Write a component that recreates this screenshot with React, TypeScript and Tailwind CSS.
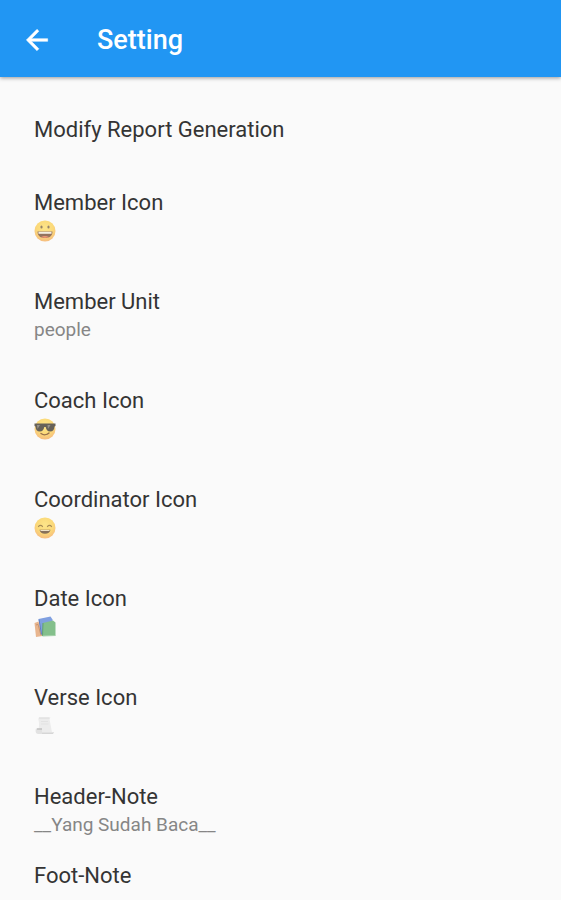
import type { ReactNode } from "react";

const iconProps = {
  className: "block h-[22px] w-[22px]",
  viewBox: "0 0 22 22",
  "aria-hidden": true,
} as const;

function FaceGradient({ id }: { id: string }) {
  return (
    <defs>
      <radialGradient id={id} cx="50%" cy="35%" r="65%">
        <stop offset="0" stopColor="#fde58a" />
        <stop offset="0.6" stopColor="#fbd978" />
        <stop offset="1" stopColor="#f6bd80" />
      </radialGradient>
    </defs>
  );
}

function GrinningFace() {
  return (
    <svg {...iconProps}>
      <FaceGradient id="grin" />
      <circle cx="11" cy="11" r="10.5" fill="url(#grin)" />
      <ellipse cx="7.5" cy="7" rx="1.1" ry="1.6" fill="#94836a" />
      <ellipse cx="14.5" cy="7" rx="1.1" ry="1.6" fill="#94836a" />
      <path d="M3.5 11.500h15c0 4.500-3.300 6.500-7.500 6.500s-7.500-2-7.500-6.500z" fill="#94735e" />
      <path d="M4.500 11.800h13v2h-13z" fill="#f3eee2" />
      <path d="M7 17c2-1.500 6-1.500 8 0-2 1.200-6 1.200-8 0z" fill="#e99373" />
    </svg>
  );
}

function SunglassesFace() {
  return (
    <svg {...iconProps}>
      <FaceGradient id="cool" />
      <circle cx="11" cy="11" r="10.5" fill="url(#cool)" />
      <path d="M0.500 5.500h21v2.500l-1 .5c-.3 3.500-1.500 5-4.300 5-2.800 0-4-1.800-4.500-4.500h-1.400c-.5 2.700-1.700 4.500-4.500 4.500s-4-1.500-4.300-5l-1-.5z" fill="#666158" />
      <path d="M3 7l3 0-2.500 4zM13.500 7l3 0-2.500 4z" fill="#96928a" />
      <path d="M7 15.500c2.500 1.800 6 1.500 8-.5" fill="none" stroke="#98704c" strokeWidth="1.400" strokeLinecap="round" />
    </svg>
  );
}

function SmilingFace() {
  return (
    <svg {...iconProps}>
      <FaceGradient id="smile" />
      <circle cx="11" cy="11" r="10.5" fill="url(#smile)" />
      <path d="M4.500 9.500c1-1.500 3-1.500 4 0M13.500 9.500c1-1.500 3-1.500 4 0" fill="none" stroke="#a88d58" strokeWidth="1.200" strokeLinecap="round" />
      <path d="M5.500 12.800h11c-.5 2.800-2.500 4-5.500 4s-5-1.200-5.500-4z" fill="#87705a" />
      <path d="M6.500 13h9v1h-9z" fill="#eee2c8" />
    </svg>
  );
}

function Books() {
  return (
    <svg {...iconProps}>
      <path d="M0.500 7l4-1.500 4 14.500-6.500 1z" fill="#e8b58e" />
      <path d="M2 9l2-.7 3 11" fill="none" stroke="#c89570" strokeWidth="1" />
      <path d="M4.500 3l12-2.500 2 3v12l-11 3z" fill="#7f9fe0" />
      <path d="M5 3.500l2.500 15" stroke="#607fc0" strokeWidth="1" />
      <path d="M9 7l10-2.500 2.500 2v13l-13 .5z" fill="#83bf8b" />
      <path d="M9 7l-.5 13" stroke="#62a070" strokeWidth="1" />
      <path d="M8.500 20l13-.5" stroke="#a3cfa8" strokeWidth="1.200" />
    </svg>
  );
}

function Scroll() {
  return (
    <svg {...iconProps}>
      <path d="M5 2.500h11.500c-1 1-1 2.500-.5 4l2 11h-14c1-4 1.500-9 .5-12.500-.3-1-.2-2 .5-2.500z" fill="#ececec" />
      <path d="M5 3h10.500" stroke="#dadada" strokeWidth="1" />
      <path d="M7 6.500h7M7 9h7.500" stroke="#e2e2e2" strokeWidth="1" />
      <path d="M2 13.500h6v3.500h12c0 1.500-.7 2-2 2h-14c-2 0-3-3-2-5.500z" fill="#e2e2e2" />
      <path d="M3 14h5" stroke="#b9b9b9" strokeWidth="1.200" />
      <path d="M8 18.500h11" stroke="#d6d6d6" strokeWidth="1" />
    </svg>
  );
}

type Setting = { title: string; value: ReactNode };

const settings: Setting[] = [
  { title: "Member Icon", value: <GrinningFace /> },
  { title: "Member Unit", value: "people" },
  { title: "Coach Icon", value: <SunglassesFace /> },
  { title: "Coordinator Icon", value: <SmilingFace /> },
  { title: "Date Icon", value: <Books /> },
  { title: "Verse Icon", value: <Scroll /> },
];

function SettingRow({ title, value }: Setting) {
  return (
    <button type="button" className="block w-full px-[34px] text-left">
      <span className="block text-[22px] leading-[29px]">{title}</span>
      <span className="flex h-[28px] items-center text-[19px] leading-[28px] text-[#868686]">{value}</span>
    </button>
  );
}

export default function App() {
  return (
    <div className="min-h-screen bg-[#fafafa] font-['Roboto',sans-serif] text-[#343434]">
      <header className="flex h-[77px] items-center bg-[#2196f3] px-[21px] pt-[3px] text-white shadow-[0_1px_4px_rgba(0,0,0,0.4)]">
        <button type="button" aria-label="Back" className="flex h-8 w-8 items-center justify-center">
          <svg className="h-[32px] w-[32px]" viewBox="0 0 24 24" fill="currentColor" stroke="currentColor" strokeWidth="0.4" aria-hidden="true">
            <path d="M20 11H7.830l5.590-5.590L12 4l-8 8 8 8 1.410-1.410L7.830 13H20z" />
          </svg>
        </button>
        <h1 className="ml-11 text-[27px] leading-8 font-medium">Setting</h1>
      </header>
      <main className="pb-[11px]">
        <h2 className="px-[34px] pt-[38px] text-[22px] leading-[29px]">Modify Report Generation</h2>
        <div className="mt-11 flex flex-col gap-[42px]">
          {settings.map((setting) => (
            <SettingRow key={setting.title} title={setting.title} value={setting.value} />
          ))}
          <div className="flex flex-col gap-[22px]">
            <SettingRow title="Header-Note" value="__Yang Sudah Baca__" />
            <button type="button" className="block w-full px-[34px] text-left text-[22px] leading-[29px]">
              Foot-Note
            </button>
          </div>
        </div>
      </main>
    </div>
  );
}
